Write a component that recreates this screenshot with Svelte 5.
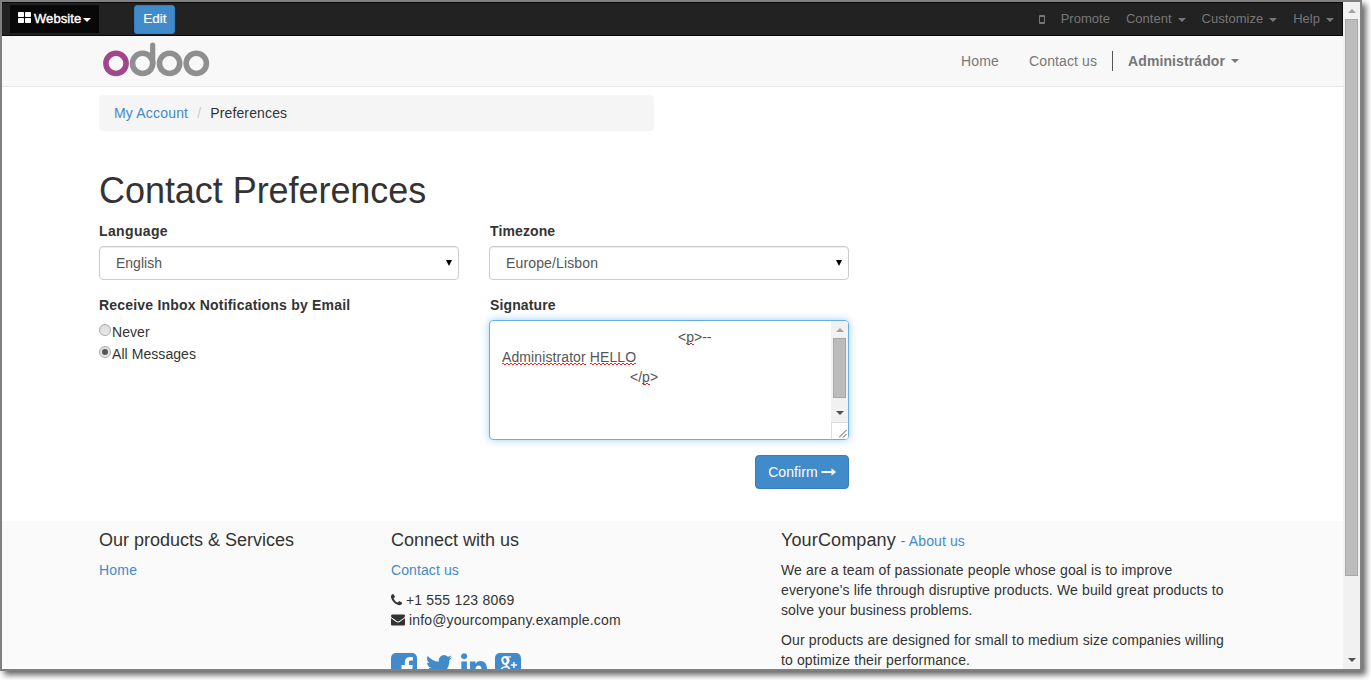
<script>
  const tools = [
    { label: 'Promote', caret: false },
    { label: 'Content', caret: true },
    { label: 'Customize', caret: true },
    { label: 'Help', caret: true }
  ];
</script>

<div class="window">
  <div class="page">
    <div class="topbar">
      <button class="website">
        <svg width="13" height="11" viewBox="0 0 13 11" fill="#fff"><rect width="6" height="5" rx=".7" /><rect x="7" width="6" height="5" rx=".7" /><rect y="6" width="6" height="5" rx=".7" /><rect x="7" y="6" width="6" height="5" rx=".7" /></svg>
        <span class="wlabel">Website</span><i class="caret"></i>
      </button>
      <button class="edit">Edit</button>
      <div class="tools">
        <svg class="mobile" width="6" height="9" viewBox="0 0 6 9"><path d="M.5.5h5v8h-5zM1 1.500h4M1 7.500h4" fill="none" stroke="#777" /></svg>
        {#each tools as t}
          <span class="tool"><span>{t.label}</span>{#if t.caret}<i class="caret"></i>{/if}</span>
        {/each}
      </div>
    </div>

    <nav class="navbar">
      <svg class="logo" width="108" height="36" viewBox="0 0 108 36" fill="none" stroke-width="5.6">
        <circle cx="14" cy="21.4" r="10.1" stroke="#a24689" />
        <g stroke="#8f8f8f">
          <circle cx="40.6" cy="21.4" r="10.1" />
          <path d="M50.7 21.4V3.2" stroke-linecap="round" stroke-width="5.2" />
          <circle cx="67.6" cy="21.4" r="10.1" />
          <circle cx="94.3" cy="21.4" r="10.1" />
        </g>
      </svg>
      <div class="links">
        <span class="home">Home</span>
        <span class="contact">Contact us</span>
        <span class="user"><b>Administrádor</b><i class="caret"></i></span>
      </div>
    </nav>

    <main>
      <div class="crumb"><a class="c1">My Account</a><span class="slash">/</span><span class="c2">Preferences</span></div>
      <h1><span>Contact Preferences</span></h1>
      <div class="form">
        <div class="field">
          <label class="l1">Language</label>
          <div class="select"><span>English</span><i class="arrow"></i></div>
        </div>
        <div class="field">
          <label class="l2">Timezone</label>
          <div class="select"><span class="tz">Europe/Lisbon</span><i class="arrow"></i></div>
        </div>
        <div class="field">
          <label class="l3">Receive Inbox Notifications by Email</label>
          <div class="radio"><i></i><span>Never</span></div>
          <div class="radio"><i class="on"></i><span>All Messages</span></div>
        </div>
        <div class="field">
          <label class="l4">Signature</label>
          <div class="textarea">
            <div class="sig">
              <div class="s1">&lt;<u>p</u>&gt;--</div>
              <div class="s2"><u>Administrator</u> <u>HELLO</u></div>
              <div class="s3">&lt;/<u>p</u>&gt;</div>
            </div>
            <div class="sidebar">
              <i class="up"></i>
              <div class="thumb"></div>
              <i class="down"></i>
              <div class="grip"><svg width="8" height="8" viewBox="0 0 8 8"><path d="M0 7.500L7.500 0M4 7.500L7.500 4" stroke="#555" fill="none" /></svg></div>
            </div>
          </div>
        </div>
      </div>
      <button class="confirm"><span>Confirm</span><svg width="15" height="8" viewBox="0 0 15 8"><path d="M.5 3h10V.3L15 4l-4.500 3.700V5H.5z" fill="#fff" /></svg></button>
    </main>

    <footer>
      <section class="f1">
        <h4>Our products &amp; Services</h4>
        <p><a class="fh">Home</a></p>
      </section>
      <section class="f2">
        <h4>Connect with us</h4>
        <p><a class="cu">Contact us</a></p>
        <p>
          <svg width="11" height="20" viewBox="192 -400 1408 2560" fill="#333"><path d="M1600 1240q0 27-10 70.500t-21 68.500q-21 50-122 106-94 51-186 51-27 0-53-3.500t-57.500-12.500-47-14.500-55.500-20.500-49-18q-98-35-175-83-127-79-264-216t-216-264q-48-77-83-175-3-9-18-49t-20.500-55.500-14.500-47-12.500-57.500-3.500-53q0-92 51-186 56-101 106-122 25-11 68.500-21t70.500-10q14 0 21 3 18 6 53 76 11 19 30 54t35 63.500 31 53.500q3 4 17.500 25t21.500 35.500 7 28.500q0 20-28.500 50t-62 55-62 53-28.500 46q0 9 5 22.500t8.500 20.500 14 24 11.500 19q76 137 174 235t235 174q2 1 19 11.500t24 14 20.500 8.500 22.500 5q18 0 46-28.500t53-62 55-62 50-28.500q14 0 28.500 7t35.500 21.500 25 17.500q25 15 53.500 31t63.500 35 54 30q70 35 76 53 3 7 3 21z" /></svg>
          <span class="phone">+1 555 123 8069</span><br />
          <svg width="14" height="20" viewBox="0 -320 1792 2560" fill="#333"><path d="M1792 710v794q0 66-47 113t-113 47h-1472q-66 0-113-47t-47-113v-794q44 49 101 87 362 246 497 345 57 42 92.500 65.500t94.500 48 110 24.500h2q51 0 110-24.500t94.500-48 92.500-65.500q170-123 498-345 57-39 100-87zm0-294q0 79-49 151t-122 123q-376 261-468 325-10 7-42.500 31t-54 38.500-52 32.500-57.500 27-50 9h-2q-23 0-50-9t-57.500-27-52-32.500-54-38.500-42.500-31q-91-64-262-182.500t-205-142.500q-62-42-117-115.500t-55-136.500q0-78 41.500-130t118.500-52h1472q65 0 112.500 47t47.500 113z" /></svg>
          <span class="mail">info@yourcompany.example.com</span>
        </p>
        <div class="social">
          <svg width="26" height="26" viewBox="128 128 1536 1536"><path d="M1376 128q119 0 203.500 84.500t84.500 203.500v960q0 119-84.500 203.500t-203.500 84.500h-188v-595h199l30-232h-229v-148q0-56 23.500-84t91.500-28l122-1v-207q-63-9-178-9-136 0-217.500 80t-81.500 226v171h-200v232h200v595h-532q-119 0-203.500-84.500t-84.500-203.500v-960q0-119 84.500-203.500t203.500-84.500h960z" /></svg>
          <svg class="tw" width="26" height="26" viewBox="108 128 1576 1576"><path d="M1684 408q-67 98-162 167 1 14 1 42 0 130-38 259.500t-115.500 248.500-184.500 210.500-258 146-323 54.500q-271 0-496-145 35 4 78 4 225 0 401-138-105-2-188-64.500t-114-159.500q33 5 61 5 43 0 85-11-112-23-185.500-111.500t-73.500-205.500v-4q68 38 146 41-66-44-105-115t-39-154q0-88 44-163 121 149 294.500 238.500t371.500 99.500q-8-38-8-74 0-134 94.500-228.500t228.500-94.500q140 0 236 102 109-21 205-78-37 115-142 178 93-10 186-50z" /></svg>
          <svg class="li" width="26" height="26" viewBox="128 128 1536 1536"><path d="M477 625v991h-330v-991h330zm21-306q1 73-50.500 122t-135.500 49h-2q-82 0-132-49t-50-122q0-74 51.500-122.500t134.500-48.500 133 48.500 51 122.500zm1166 729v568h-329v-530q0-105-40.500-164.500t-126.500-59.500q-63 0-105.500 34.500t-63.500 85.500q-11 30-11 81v553h-329q2-399 2-647t-1-296l-1-48h329v144h-2q20-32 41-56t56.500-52 87-43.500 114.500-15.500q171 0 275 113.500t104 332.500z" /></svg>
          <svg class="gp" width="26" height="26" viewBox="0 0 26 26"><rect width="26" height="26" rx="4.800" /><g fill="none" stroke="#fafafa"><ellipse cx="10" cy="7.500" rx="2.600" ry="3.400" stroke-width="2" transform="rotate(-14 10 7.500)" /><path d="M10 3.900h6" stroke-width="1.200" /><path d="M12.500 4.500q2.400 3 0 5.500-2.300 1.600-.5 3.200 3.300 2 2.300 5.800" stroke-width="1.800" /><path d="M12 13.800q-5.500 0-6 3.600 0 3 4.500 3 3.800 0 4.300-2.500" stroke-width="1.600" /><path d="M15.800 12h6.200M18.900 8.900v6.200" stroke-width="1.600" /></g></svg>
        </div>
      </section>
      <section class="f3">
        <h4><span class="yc">YourCompany</span> <small>- <a>About us</a></small></h4>
        <p><span class="t1">We are a team of passionate people whose goal is to improve</span><br /><span class="t2">everyone's life through disruptive products. We build great products to</span><br /><span class="t3">solve your business problems.</span></p>
        <p><span class="t4">Our products are designed for small to medium size companies willing</span><br /><span class="t5">to optimize their performance.</span></p>
      </section>
    </footer>
  </div>
  <div class="scroll">
    <i class="up"></i>
    <div class="thumb"></div>
    <i class="down"></i>
  </div>
</div>

<style>
  :global(body) { background: #fff; min-height: 100vh; }
  :global(html) { overflow: hidden; }
  * { box-sizing: border-box; }
  .window {
    width: 1362px; height: 671px; border: 2px solid #808080; display: flex; background: #fff;
    font: 14px/20px "Liberation Sans", Arial, sans-serif; color: #333;
    box-shadow: 4px 4px 6px rgba(0, 0, 0, .6);
  }
  .page { width: 1341px; height: 667px; overflow: hidden; display: flex; flex-direction: column; }
  button { font: inherit; color: #fff; border: 0; padding: 0; margin: 0; }
  a { color: #428bca; }
  svg { flex: none; }
  .caret { flex: none; display: inline-block; width: 0; height: 0; border: 4px solid transparent; border-top-color: currentColor; border-bottom: 0; }
  .topbar { flex: none; height: 34px; background: #222; border: 1px solid #080808; border-left: 0; display: flex; align-items: flex-start; }
  .website { margin: 2px 0 0 8px; width: 89px; height: 28px; background: #080808; display: flex; align-items: center; padding-left: 8px; }
  .website svg { margin-bottom: 3px; }
  .wlabel { margin: -1px 0 0 3px; width: 49px; text-align: left; font-size: 13px; -webkit-text-stroke: .4px #fff; letter-spacing: .08px; }
  .website .caret { margin-top: 2px; }
  .edit { margin: 2px 0 0 35px; width: 41px; height: 29px; background: #428bca; border: 1px solid #357ebd; border-radius: 3px; -webkit-text-stroke: .2px #fff; padding: 0 0 2px 1px; font-size: 13.500px; }
  .tools { margin-left: auto; display: flex; align-items: center; height: 32px; color: #777; padding-right: 8px; }
  .tools .mobile { margin-right: 16px; }
  .tool { display: flex; align-items: center; gap: 6px; margin-right: 16px; font-size: 13px; letter-spacing: .02px; }
  .tool:last-child { margin-right: 0; }
  .tool .caret { margin-top: 2px; }
  .navbar { flex: none; height: 51px; background: #f8f8f8; border-bottom: 1px solid #e7e7e7; display: flex; justify-content: space-between; padding: 5px 104px 0 100px; color: #777; }
  .logo { margin-top: 1px; }
  .links { display: flex; height: 40px; align-items: center; }
  .home { letter-spacing: .2px; }
  .contact { margin-left: 30px; letter-spacing: .1px; }
  .user { margin-left: 15px; border-left: 1px solid #555; padding-left: 15px; display: flex; align-items: center; gap: 6px; letter-spacing: .1px; }
  main { height: 434px; flex: none; padding: 8px 0 0 97px; display: flex; flex-direction: column; }
  .crumb { width: 555px; height: 36px; padding: 8px 15px; background: #f5f5f5; border-radius: 4px; display: flex; }
  .c1 { letter-spacing: .18px; }
  .c2 { letter-spacing: .14px; }
  .slash { color: #ccc; width: 22px; text-align: center; }
  h1 { margin: 40px 0 10px; font-size: 36px; line-height: 40px; font-weight: 400; white-space: nowrap; letter-spacing: -.05px; }
  .form { display: grid; grid-template-columns: 360px 360px; column-gap: 30px; grid-template-rows: 74px 145px; }
  .field { display: flex; flex-direction: column; }
  label { font-weight: 700; height: 20px; margin-bottom: 5px; align-self: flex-start; white-space: nowrap; }
  .l1 { letter-spacing: .36px; }
  .l2, .l4 { padding-left: 1px; letter-spacing: .12px; }
  .l3 { letter-spacing: .195px; }
  .select { height: 34px; border: 1px solid #ccc; border-radius: 4px; box-shadow: inset 0 1px 1px rgba(0, 0, 0, .075); display: flex; align-items: center; justify-content: space-between; padding: 0 6px 0 16px; color: #555; }
  .tz { letter-spacing: .14px; }
  .arrow { border: 3.500px solid transparent; border-top: 6px solid #000; border-bottom: 0; }
  .radio { height: 22px; display: flex; align-items: center; padding-top: 1px; letter-spacing: .06px; }
  .radio i { width: 12px; height: 12px; border: 1px solid #aaa; border-radius: 50%; background: linear-gradient(#ddd, #e8e8e8); margin: -4px 1px 0 0; display: flex; align-items: center; justify-content: center; }
  .radio i.on::after { content: ""; width: 6px; height: 6px; border-radius: 50%; background: #555; }
  .textarea { height: 120px; margin-top: -1px; border: 1px solid #66afe9; border-radius: 4px; box-shadow: 0 0 8px rgba(102, 175, 233, .6); display: flex; overflow: hidden; color: #555; }
  .l4 { margin-bottom: 6px; }
  .sig { flex: 1; padding: 6px 12px; white-space: nowrap; }
  .s1 { margin-left: 176px; }
  .s2 { letter-spacing: .1px; }
  .s3 { margin-left: 128px; }
  u { text-decoration: none; display: inline-block; height: 20px; vertical-align: top; background: repeating-linear-gradient(90deg, #f22 0 2px, transparent 2px 4px) 0 16px / 100% 1px no-repeat, repeating-linear-gradient(90deg, transparent 0 2px, #f22 2px 4px) 0 17px / 100% 1px no-repeat; }
  .sidebar { width: 17px; background: #f1f1f1; display: flex; flex-direction: column; align-items: center; }
  .up { border: 4px solid transparent; border-bottom: 4px solid #a3a3a3; border-top: 0; flex: none; }
  .down { border: 4px solid transparent; border-top: 4px solid #505050; border-bottom: 0; flex: none; }
  .thumb { background: #bcbcbc; border: 1px solid #a8a8a8; width: 13px; flex: none; }
  .sidebar .up { margin: 7px 0 6px; }
  .sidebar .thumb { height: 60px; }
  .sidebar .down { margin: 13px 0 7px; }
  .grip { width: 17px; flex: 1; background: #fff; border: 1px solid #ddd; border-width: 1px 0 0 1px; display: flex; align-items: flex-end; justify-content: flex-end; padding: 0 1px 1px 0; }
  .confirm { margin: 15px 0 0 656px; width: 94px; height: 34px; background: #428bca; border: 1px solid #357ebd; border-radius: 4px; display: flex; align-items: center; justify-content: center; gap: 3px; letter-spacing: .1px; }
  footer { flex: 1; background: #fafafa; display: flex; padding: 0 0 0 97px; }
  section { flex: none; }
  .f1 { width: 292px; }
  .f2 { width: 390px; }
  .f3 { width: 460px; }
  h4 { font-size: 18px; line-height: 20px; height: 20px; font-weight: 400; margin: 9px 0 10px; }
  small { font-size: 14px; color: #777; letter-spacing: .1px; }
  p { margin: 0 0 10px; white-space: nowrap; }
  p svg { vertical-align: top; }
  .fh { letter-spacing: .2px; }
  .cu { letter-spacing: .1px; }
  .phone { letter-spacing: .2px; }
  .mail { letter-spacing: .18px; }
  .yc { letter-spacing: .13px; }
  .t1 { letter-spacing: .148px; }
  .t2 { letter-spacing: .14px; }
  .t3 { letter-spacing: .11px; }
  .t4, .t5 { letter-spacing: .13px; }
  .social { display: flex; margin-top: 23px; height: 26px; fill: #428bca; }
  .tw { margin-left: 9px; }
  .li { margin-left: 9px; }
  .gp { margin-left: 8px; }
  .scroll { width: 17px; background: #f1f1f1; display: flex; flex-direction: column; align-items: center; }
  .scroll .up { margin: 7px 0 6px; }
  .scroll .thumb { height: 557px; }
  .scroll .down { margin-top: auto; margin-bottom: 7px; }
</style>
